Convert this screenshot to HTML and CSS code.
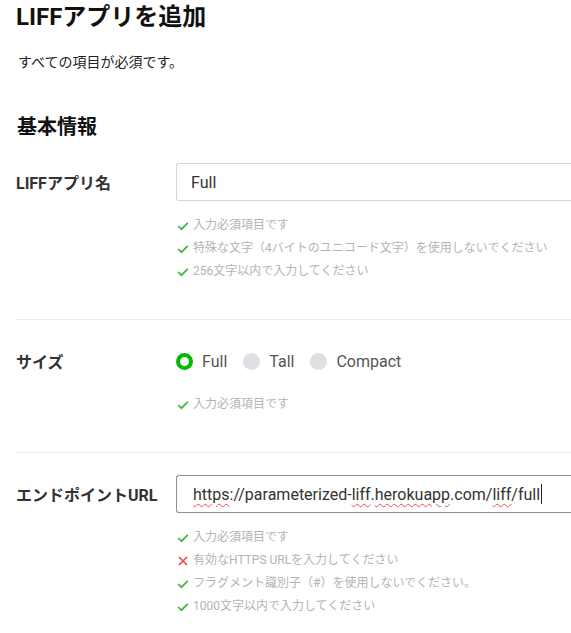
FILE: index.html
```html
<!DOCTYPE html>
<html lang="ja">
<head>
    <meta charset="UTF-8">
    <meta name="viewport" content="width=device-width, initial-scale=1.0">
    <title>LIFFアプリを追加</title>
    <link rel="stylesheet" href="styles.css">
</head>
<body>

<div class="page">
    <h1 class="page-title">LIFFアプリを追加</h1>
    <p class="page-note">すべての項目が必須です。</p>

    <h2 class="section-title">基本情報</h2>

    <div class="form-row">
        <div class="form-label">LIFFアプリ名</div>
        <div class="form-body">
            <div class="control">
                <div class="text-field">Full</div>
            </div>
            <ul class="hints">
                <li class="hint ok"><svg class="hint-icon" viewBox="0 0 12 10"><polyline points="1.2,5 4.4,8.2 10.8,1.8"/></svg>入力必須項目です</li>
                <li class="hint ok"><svg class="hint-icon" viewBox="0 0 12 10"><polyline points="1.2,5 4.4,8.2 10.8,1.8"/></svg>特殊な文字（4バイトのユニコード文字）を使用しないでください</li>
                <li class="hint ok"><svg class="hint-icon" viewBox="0 0 12 10"><polyline points="1.2,5 4.4,8.2 10.8,1.8"/></svg>256文字以内で入力してください</li>
            </ul>
        </div>
    </div>

    <div class="form-row">
        <div class="form-label">サイズ</div>
        <div class="form-body">
            <div class="control radios">
                <span class="radio checked"></span><span class="radio-text">Full</span>
                <span class="radio"></span><span class="radio-text">Tall</span>
                <span class="radio"></span><span class="radio-text">Compact</span>
            </div>
            <ul class="hints">
                <li class="hint ok"><svg class="hint-icon" viewBox="0 0 12 10"><polyline points="1.2,5 4.4,8.2 10.8,1.8"/></svg>入力必須項目です</li>
            </ul>
        </div>
    </div>

    <div class="form-row last">
        <div class="form-label">エンドポイントURL</div>
        <div class="form-body">
            <div class="control">
                <div class="text-field focused"><span class="typo">https</span>://parameterized-<span class="typo">liff</span>.<span class="typo">herokuapp</span>.com/<span class="typo">liff</span>/full<span class="caret"></span></div>
            </div>
            <ul class="hints">
                <li class="hint ok"><svg class="hint-icon" viewBox="0 0 12 10"><polyline points="1.2,5 4.4,8.2 10.8,1.8"/></svg>入力必須項目です</li>
                <li class="hint ng"><svg class="hint-icon" viewBox="0 0 12 10"><line x1="2" y1="1" x2="10" y2="9"/><line x1="10" y1="1" x2="2" y2="9"/></svg>有効なHTTPS URLを入力してください</li>
                <li class="hint ok"><svg class="hint-icon" viewBox="0 0 12 10"><polyline points="1.2,5 4.4,8.2 10.8,1.8"/></svg>フラグメント識別子（#）を使用しないでください。</li>
                <li class="hint ok"><svg class="hint-icon" viewBox="0 0 12 10"><polyline points="1.2,5 4.4,8.2 10.8,1.8"/></svg>1000文字以内で入力してください</li>
            </ul>
        </div>
    </div>
</div>

</body>
</html>
```

FILE: styles.css
```css
html, body {
    margin: 0;
    padding: 0;
    background-color: #fff;
    overflow: hidden;
}

body {
    font-family: Roboto, "Noto Sans CJK JP", sans-serif;
    color: #333;
}

/* the form continues past the right edge of the window */
.page {
    padding: 0 0 0 16px;
}

.page-title {
    margin: 0;
    font-size: 24px;
    line-height: 34px;
    font-weight: bold;
    color: #111;
}

.page-note {
    margin: 18px 0 0 2px;
    font-size: 14px;
    line-height: 20px;
    color: #222;
}

.section-title {
    margin: 41px 0 0 1px;
    font-size: 20px;
    line-height: 28px;
    font-weight: bold;
    color: #111;
}

.form-row {
    display: grid;
    grid-template-columns: 160px 1fr;
    padding: 22px 0 36px;
    border-bottom: 1px solid #e9eaec;
}

.form-row.last {
    border-bottom: none;
}

.form-label {
    height: 38px;
    display: flex;
    align-items: center;
    font-size: 16px;
    font-weight: bold;
    color: #333;
}

.form-body {
    min-width: 0;
}

.control {
    height: 38px;
    display: flex;
    align-items: center;
}

.text-field {
    box-sizing: border-box;
    width: 100%;
    height: 38px;
    padding: 0 14px;
    display: flex;
    align-items: center;
    border: 1px solid #d5d6d9;
    border-right: none;
    border-radius: 3px 0 0 3px;
    font-size: 16px;
    color: #333;
    white-space: nowrap;
    overflow: hidden;
}

.text-field.focused {
    border-color: #8f9196;
    padding-left: 16px;
}

.typo {
    text-decoration: underline wavy #e84c4c;
    text-decoration-thickness: 1px;
    text-underline-offset: 3px;
}

.caret {
    display: inline-block;
    flex: none;
    width: 1px;
    height: 20px;
    margin-left: 1px;
    background-color: #222;
}

.radios {
    font-size: 16px;
    color: #555;
}

.radio {
    box-sizing: border-box;
    width: 17px;
    height: 17px;
    border-radius: 50%;
    background-color: #dfe0e3;
    margin-right: 9px;
}

.radio.checked {
    background-color: #fff;
    border: 4.5px solid #00b900;
}

.radio-text {
    margin-right: 16px;
}

.hints {
    list-style: none;
    margin: 13px 0 0;
    padding: 0;
}

.hint {
    display: flex;
    align-items: center;
    font-size: 12px;
    line-height: 23px;
    color: #b3b4b6;
    white-space: nowrap;
}

.hint-icon {
    flex: none;
    width: 12px;
    height: 10px;
    margin: 0 4px 0 1px;
    fill: none;
    stroke-width: 1.7;
}

.hint.ok .hint-icon {
    stroke: #3fb441;
}

.hint.ng .hint-icon {
    stroke: #e6514b;
}
```
